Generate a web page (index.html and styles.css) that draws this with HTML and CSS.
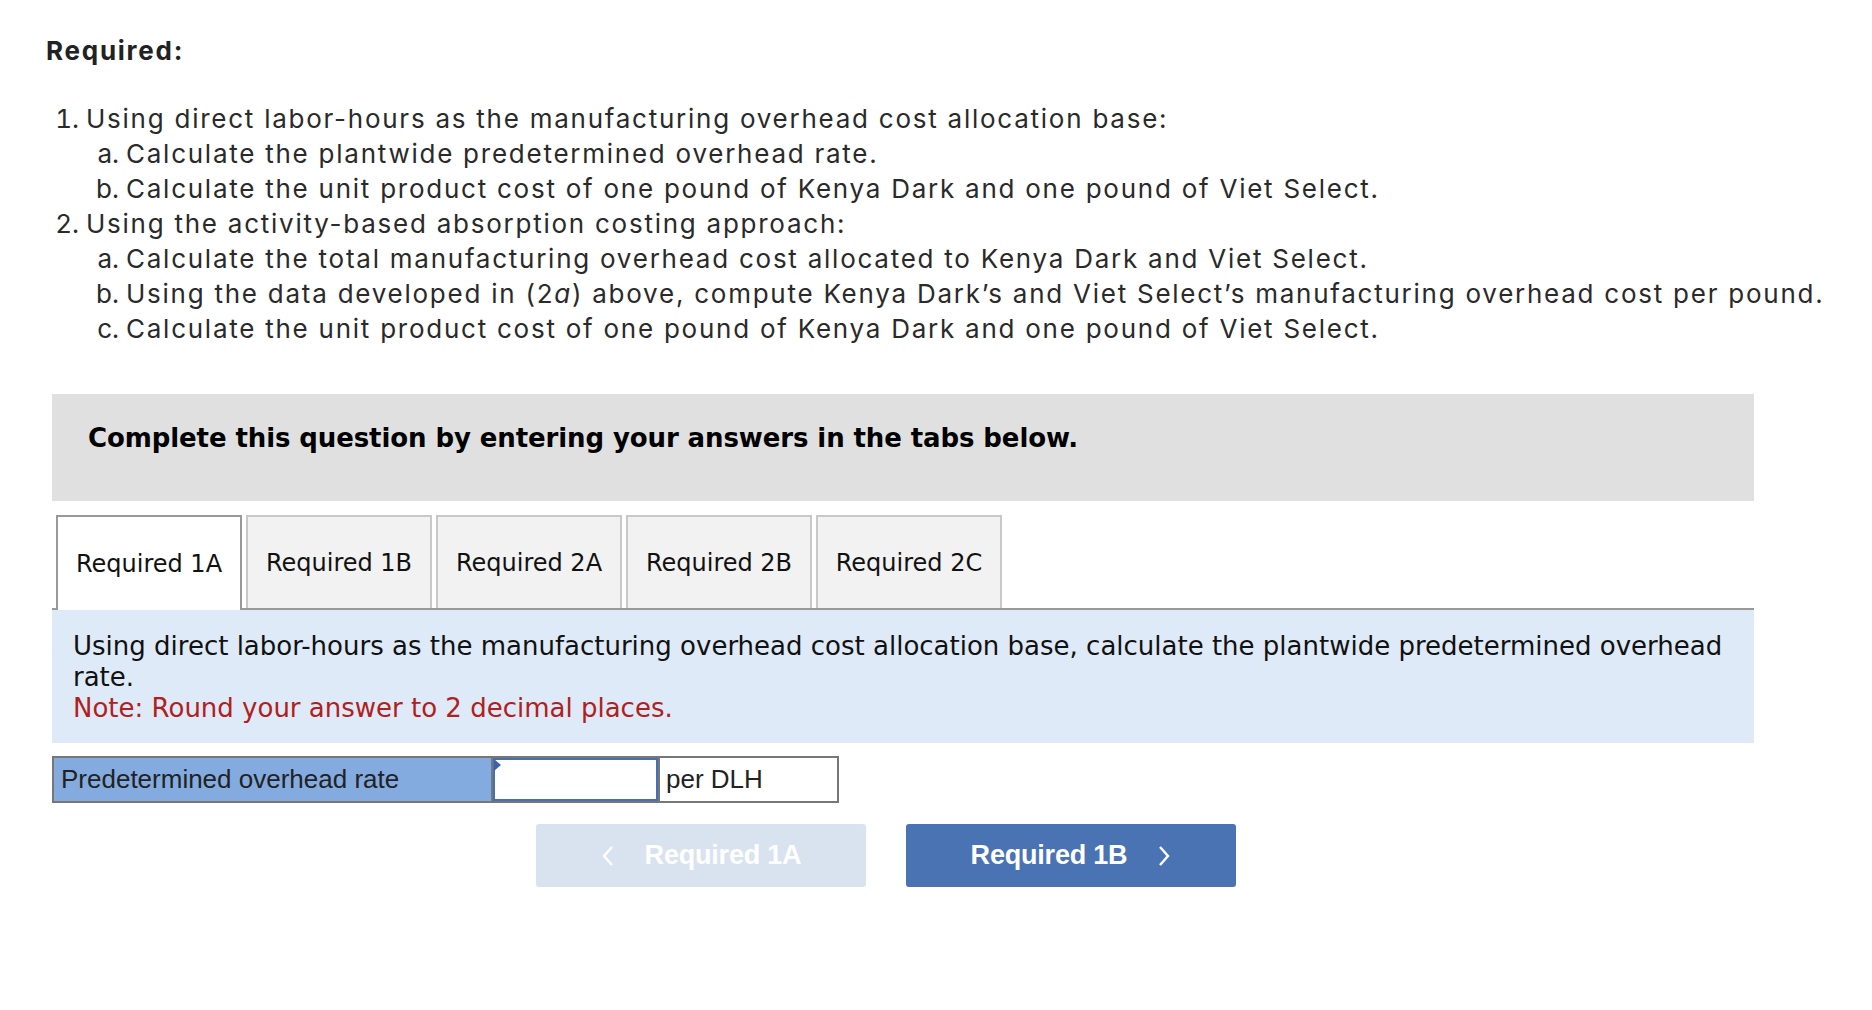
FILE: index.html
```html
<!DOCTYPE html>
<html lang="en">
<head>
<meta charset="utf-8">
<title>Required</title>
<link rel="stylesheet" href="styles.css">
</head>
<body>
<div class="page">
  <section class="req">
    <h2 class="req-title">Required:</h2>
    <ol class="req-list">
      <li>Using direct labor-hours as the manufacturing overhead cost allocation base:
        <ol class="sub">
          <li>Calculate the plantwide predetermined overhead rate.</li>
          <li>Calculate the unit product cost of one pound of Kenya Dark and one pound of Viet Select.</li>
        </ol>
      </li>
      <li>Using the activity-based absorption costing approach:
        <ol class="sub">
          <li>Calculate the total manufacturing overhead cost allocated to Kenya Dark and Viet Select.</li>
          <li>Using the data developed in (2<i>a</i>) above, compute Kenya Dark’s and Viet Select’s manufacturing overhead cost per pound.</li>
          <li>Calculate the unit product cost of one pound of Kenya Dark and one pound of Viet Select.</li>
        </ol>
      </li>
    </ol>
  </section>

  <section class="question">
    <div class="instruct">Complete this question by entering your answers in the tabs below.</div>
    <div class="tabs">
      <div class="tab active">Required 1A</div>
      <div class="tab">Required 1B</div>
      <div class="tab">Required 2A</div>
      <div class="tab">Required 2B</div>
      <div class="tab">Required 2C</div>
    </div>
    <div class="panel">
      <p class="panel-text">Using direct labor-hours as the manufacturing overhead cost allocation base, calculate the plantwide predetermined overhead rate.</p>
      <p class="panel-note">Note: Round your answer to 2 decimal places.</p>
    </div>
    <div class="answer-row">
      <div class="answer-label">Predetermined overhead rate</div>
      <div class="answer-input"><span class="flag"></span></div>
      <div class="answer-unit">per DLH</div>
    </div>
    <div class="nav">
      <button class="btn btn-prev" type="button">
        <svg class="chev" width="14" height="22" viewBox="0 0 14 22"><path d="M11 2 L3 11 L11 20" fill="none" stroke="#fff" stroke-width="2.4"/></svg>
        <span>Required 1A</span>
      </button>
      <button class="btn btn-next" type="button">
        <span>Required 1B</span>
        <svg class="chev" width="14" height="22" viewBox="0 0 14 22"><path d="M3 2 L11 11 L3 20" fill="none" stroke="#fff" stroke-width="2.4"/></svg>
      </button>
    </div>
  </section>
</div>
</body>
</html>
```

FILE: styles.css
```css
* { box-sizing: border-box; }

body {
  margin: 0;
  background: #fff;
}

.page {
  padding: 33px 0 0 46px;
  width: 1872px;
}

.req {
  font-family: "Inter", "Open Sans", sans-serif;
  color: #2a2a2a;
  font-size: 26px;
  line-height: 35px;
  letter-spacing: 1.75px;
}

.req-title {
  margin: 0;
  font-size: 26px;
  line-height: 35px;
  font-weight: 700;
  color: #222;
}

.req-list {
  margin: 33px 0 0;
  padding-left: 40px;
}

.req-list li::marker {
  letter-spacing: 0;
}

.sub {
  list-style-type: lower-alpha;
  margin: 0;
  padding-left: 40px;
}

.sub i { font-style: italic; }

.question {
  margin: 48px 0 0 6px;
  width: 1702px;
}

.instruct {
  background: #e0e0e0;
  height: 107px;
  padding: 28px 36px 0;
  font-family: "DejaVu Sans", Verdana, sans-serif;
  font-weight: 700;
  font-size: 26px;
  line-height: 32px;
  letter-spacing: -0.1px;
  color: #000;
}

.tabs {
  display: flex;
  align-items: flex-end;
  gap: 4px;
  margin-top: 14px;
  padding-left: 4px;
  border-bottom: 2px solid #999;
  height: 95px;
}

.tab {
  width: 186px;
  height: 93px;
  background: #f2f2f2;
  border: 2px solid #c8c8c8;
  border-bottom: none;
  display: flex;
  align-items: center;
  justify-content: center;
  font-family: "DejaVu Sans", Verdana, sans-serif;
  font-size: 24px;
  color: #111;
}

.tab.active {
  background: #fff;
  border-color: #999;
  height: 95px;
  margin-bottom: -2px;
}

.panel {
  background: #deeaf7;
  padding: 21px 0 19px 21px;
  font-family: "DejaVu Sans", Verdana, sans-serif;
  font-size: 26px;
  line-height: 31px;
  color: #111;
}

.panel p { margin: 0; }

.panel-note { color: #b0201d; }

.answer-row {
  display: flex;
  margin-top: 13px;
  height: 47px;
  font-family: "Liberation Sans", Arial, sans-serif;
  font-size: 26px;
  color: #222;
}

.answer-label {
  width: 439px;
  background: #84abe0;
  border: 2px solid #777;
  border-right: none;
  padding-left: 7px;
  display: flex;
  align-items: center;
}

.answer-input {
  position: relative;
  width: 167px;
  border: 2px solid #777;
  border-right: none;
  background: #fff;
  box-shadow: inset 0 0 0 2px #4470b5;
}

.flag {
  position: absolute;
  left: 1px;
  top: 1px;
  width: 0;
  height: 0;
  border-top: 6px solid transparent;
  border-bottom: 6px solid transparent;
  border-left: 7px solid #3a64a8;
}

.answer-unit {
  width: 181px;
  border: 2px solid #777;
  background: #fff;
  padding-left: 6px;
  display: flex;
  align-items: center;
}

.nav {
  display: flex;
  gap: 40px;
  margin-top: 21px;
  padding-left: 484px;
}

.btn {
  width: 330px;
  height: 63px;
  border: none;
  border-radius: 3px;
  display: flex;
  align-items: center;
  justify-content: center;
  gap: 30px;
  font-family: "Liberation Sans", Arial, sans-serif;
  font-weight: 700;
  font-size: 27px;
  color: #fff;
  letter-spacing: -0.2px;
}

.btn-prev { background: #d9e3ef; }
.btn-next { background: #4a73b4; }

.chev { display: block; }
```
